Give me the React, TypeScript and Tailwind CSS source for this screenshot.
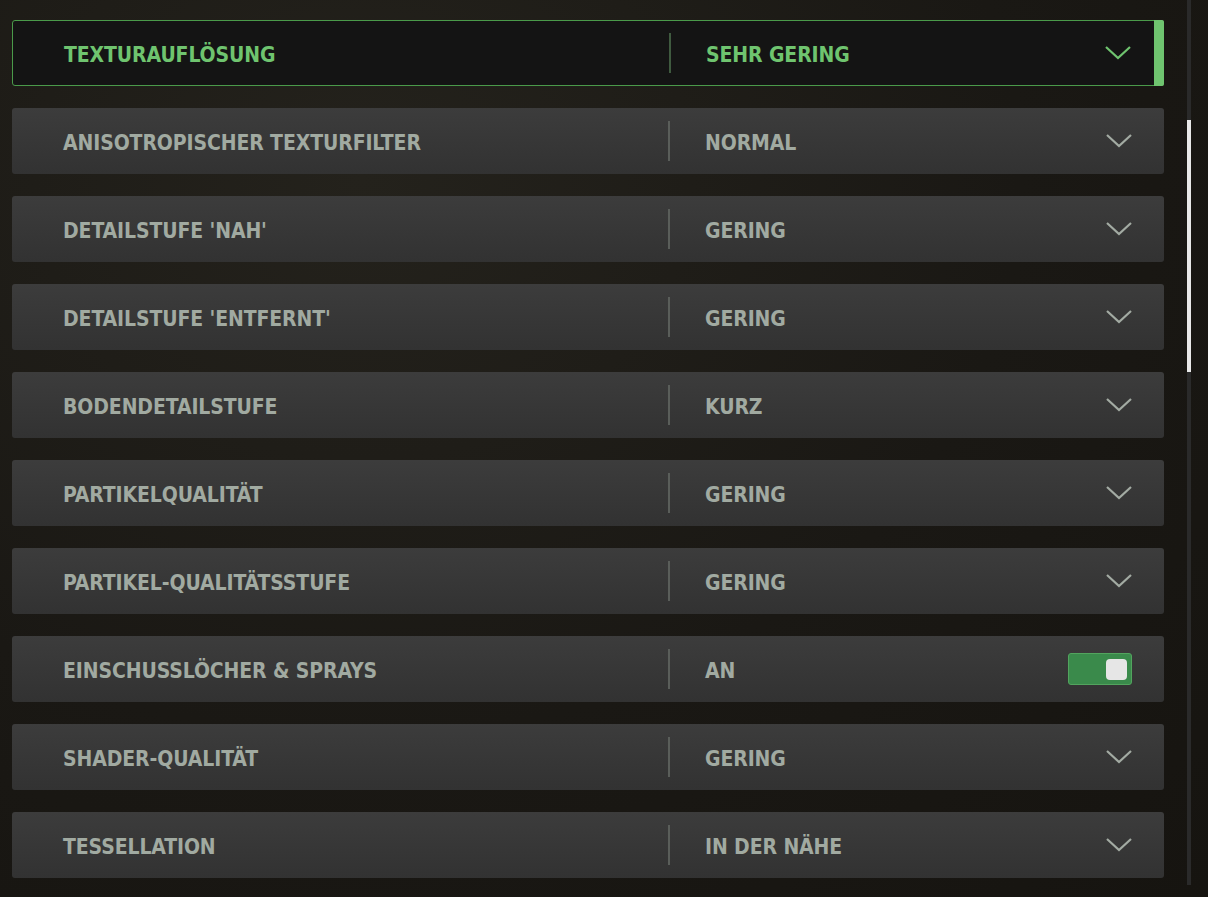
import React from 'react';

type Row = { label: string; value: string; toggle?: boolean; active?: boolean };

const rows: Row[] = [
  { label: 'TEXTURAUFLÖSUNG', value: 'SEHR GERING', active: true },
  { label: 'ANISOTROPISCHER TEXTURFILTER', value: 'NORMAL' },
  { label: "DETAILSTUFE 'NAH'", value: 'GERING' },
  { label: "DETAILSTUFE 'ENTFERNT'", value: 'GERING' },
  { label: 'BODENDETAILSTUFE', value: 'KURZ' },
  { label: 'PARTIKELQUALITÄT', value: 'GERING' },
  { label: 'PARTIKEL-QUALITÄTSSTUFE', value: 'GERING' },
  { label: 'EINSCHUSSLÖCHER & SPRAYS', value: 'AN', toggle: true },
  { label: 'SHADER-QUALITÄT', value: 'GERING' },
  { label: 'TESSELLATION', value: 'IN DER NÄHE' },
];

const Chevron: React.FC<{ active?: boolean }> = ({ active }) => (
  <svg width="30" height="16" viewBox="0 0 30 16" className={active ? 'text-[#6fc46f]' : 'text-[#a3aba3]'}>
    <path d="M3 2 L15 13 L27 2" fill="none" stroke="currentColor" strokeWidth="2.2" />
  </svg>
);

const SettingRow: React.FC<{ row: Row }> = ({ row }) => {
  const textColor = row.active ? 'text-[#6fc46f]' : 'text-[#a1aaa1]';
  return (
    <div
      className={`relative flex items-center h-[66px] rounded-[3px] ${
        row.active
          ? 'bg-[#141414] border border-[#4a9a4a]'
          : 'bg-gradient-to-b from-[#3c3c3c] to-[#323232]'
      }`}
    >
      <div className={`w-[656px] pl-[51px] pt-[5px] ${textColor} text-[21px] font-bold tracking-[-0.005em]`}>
        {row.label}
      </div>
      <div className={`h-10 w-[2px] ${row.active ? 'bg-[#3f5a3f]' : 'bg-[#5a5e5a]'}`} />
      <div className={`flex-1 pl-[35px] pt-[5px] ${textColor} text-[21px] font-bold tracking-[-0.005em]`}>
        {row.value}
      </div>
      <div className="w-[60px] flex justify-start">
        {row.toggle ? (
          <div className="-ml-[36px] w-16 h-8 rounded-[3px] bg-[#3a8a4b] border border-[#52a45e] flex items-center justify-end pr-[4px]">
            <div className="w-[21px] h-[21px] rounded-[4px] bg-[#e6e6e6]" />
          </div>
        ) : (
          <Chevron active={row.active} />
        )}
      </div>
      {row.active && <div className="absolute right-[-1px] top-[-1px] bottom-[-1px] w-[10px] bg-[#6fc46f] rounded-r-[2px]" />}
    </div>
  );
};

export default function App() {
  return (
    <div
      className="w-[1208px] h-[897px] overflow-hidden flex bg-[radial-gradient(ellipse_at_30%_20%,#24221c_0%,#1a1814_55%,#161410_100%)]"
      style={{ fontFamily: '"DejaVu Sans Condensed", Roboto, "Liberation Sans", sans-serif' }}
    >
      <div className="w-[1152px] ml-3 pt-5 flex flex-col gap-[22px]">
        {rows.map((r) => (
          <SettingRow key={r.label} row={r} />
        ))}
      </div>
      <div className="ml-[23px] w-1 h-[885px] bg-[#2a2a2a] flex flex-col">
        <div className="h-[120px]" />
        <div className="h-[252px] bg-[#e8e8e8]" />
      </div>
    </div>
  );
}
